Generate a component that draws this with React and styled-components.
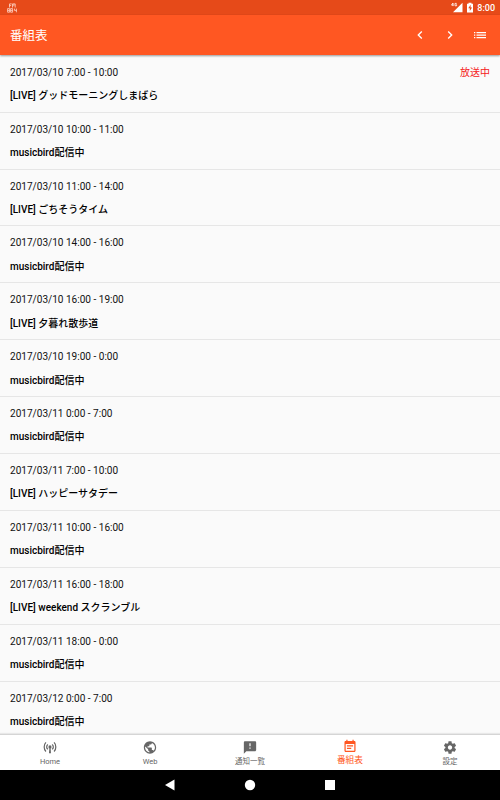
import React from 'react';
import styled, { createGlobalStyle } from 'styled-components';

const GlobalStyle = createGlobalStyle`
  * {
    box-sizing: border-box;
  }
  body {
    margin: 0;
    background: #fafafa;
    font-family: Roboto, "Noto Sans CJK JP", sans-serif;
  }
`;

const Screen = styled.div`
  width: 500px;
  height: 800px;
  display: flex;
  flex-direction: column;
  overflow: hidden;
`;

const StatusBar = styled.div`
  height: 15px;
  flex: none;
  padding: 0 5px 0 7px;
  display: flex;
  align-items: center;
  background: #e64a19;
  color: #fff;
`;

const StatusRight = styled.div`
  margin-left: auto;
  display: flex;
  align-items: center;
  gap: 3px;
`;

const Clock = styled.span`
  font-size: 9px;
  font-weight: 500;
  line-height: 15px;
  padding-top: 1px;
`;

const AppBar = styled.header`
  height: 40px;
  flex: none;
  padding: 0 12px 0 10px;
  display: flex;
  align-items: center;
  justify-content: space-between;
  background: #ff5722;
  box-shadow: 0 1px 2px rgba(0, 0, 0, 0.4);
  z-index: 1;
`;

const Title = styled.h1`
  margin: 0;
  padding-top: 1px;
  color: #fff;
  font-size: 12.5px;
  font-weight: 400;
  line-height: 21px;
`;

const Actions = styled.div`
  display: flex;
  gap: 14px;
`;

const Icon = styled.svg`
  display: block;
  flex: none;
  fill: currentColor;
`;

const ActionButton = styled.button`
  width: 16px;
  height: 16px;
  padding: 0;
  border: none;
  background: none;
  color: #fff;
  display: flex;
  align-items: center;
  justify-content: center;
`;

const List = styled.main`
  flex: 1;
  min-height: 0;
  overflow: hidden;
  padding-top: 0.8px;
  background: #fafafa;
`;

const Row = styled.div`
  height: 56.9px;
  padding: 10px 10px 0;
  border-bottom: 1px solid #e6e6e6;
  color: #111;
  font-size: 10px;
`;

const RowTop = styled.div`
  display: flex;
  justify-content: space-between;
  line-height: 14px;
`;

const Time = styled.span`
  font-size: 10.05px;
`;

const OnAir = styled.span`
  color: #f52020;
`;

const Program = styled.div`
  margin-top: 8.3px;
  line-height: 15px;
  font-weight: 500;
  color: #000;
`;

const BottomNav = styled.nav`
  height: 36px;
  flex: none;
  display: flex;
  border-top: 1px solid #d5d5d5;
  background: #fff;
  z-index: 1;
  box-shadow: 0 -1px 1px rgba(0, 0, 0, 0.07);
`;

const Tab = styled.div`
  width: 100px;
  padding-top: ${(props) => (props.$active ? '4px' : '5px')};
  display: flex;
  flex-direction: column;
  align-items: center;
  color: ${(props) => (props.$active ? '#ff5722' : '#666')};
`;

const TabLabel = styled.span`
  margin-top: ${(props) => (props.$active ? '0' : '1px')};
  font-size: ${(props) => (props.$active ? '8.75px' : '7.5px')};
  line-height: 12px;
`;

const SystemBar = styled.div`
  height: 30px;
  flex: none;
  padding: 0 162px;
  display: flex;
  align-items: center;
  justify-content: space-between;
  background: #000;
  color: #fff;
`;

const programs = [
  { time: '2017/03/10 7:00 - 10:00', name: '[LIVE] グッドモーニングしまばら', onAir: true },
  { time: '2017/03/10 10:00 - 11:00', name: 'musicbird配信中' },
  { time: '2017/03/10 11:00 - 14:00', name: '[LIVE] ごちそうタイム' },
  { time: '2017/03/10 14:00 - 16:00', name: 'musicbird配信中' },
  { time: '2017/03/10 16:00 - 19:00', name: '[LIVE] 夕暮れ散歩道' },
  { time: '2017/03/10 19:00 - 0:00', name: 'musicbird配信中' },
  { time: '2017/03/11 0:00 - 7:00', name: 'musicbird配信中' },
  { time: '2017/03/11 7:00 - 10:00', name: '[LIVE] ハッピーサタデー' },
  { time: '2017/03/11 10:00 - 16:00', name: 'musicbird配信中' },
  { time: '2017/03/11 16:00 - 18:00', name: '[LIVE] weekend スクランブル' },
  { time: '2017/03/11 18:00 - 0:00', name: 'musicbird配信中' },
  { time: '2017/03/12 0:00 - 7:00', name: 'musicbird配信中' },
];

// 24px material paths
const paths = {
  prev: 'M15.41 7.41L14 6l-6 6 6 6 1.41-1.41L10.83 12z',
  next: 'M10 6L8.59 7.41 13.17 12l-4.58 4.59L10 18l6-6z',
  web: 'M12 2C6.48 2 2 6.48 2 12s4.48 10 10 10 10-4.48 10-10S17.52 2 12 2zm-1 17.93c-3.95-.49-7-3.85-7-7.93 0-.62.08-1.21.21-1.79L9 15v1c0 1.1.9 2 2 2v1.93zm6.9-2.54c-.26-.81-1-1.39-1.9-1.39h-1v-3c0-.55-.45-1-1-1H8v-2h2c.55 0 1-.45 1-1V7h2c1.1 0 2-.9 2-2v-.41c2.93 1.19 5 4.06 5 7.41 0 2.08-.8 3.97-2.1 5.39z',
  notice: 'M20 2H4c-1.1 0-1.99.9-1.99 2L2 22l4-4h14c1.1 0 2-.9 2-2V4c0-1.1-.9-2-2-2zm-7 12h-2v-2h2v2zm0-4h-2V5h2v5z',
  schedule: 'M17 10H7v2h10v-2zm2-7h-1V1h-2v2H8V1H6v2H5c-1.11 0-1.99.9-1.99 2L3 19c0 1.1.89 2 2 2h14c1.1 0 2-.9 2-2V5c0-1.1-.9-2-2-2zm0 16H5V8h14v11zm-5-5H7v2h7v-2z',
  settings: 'M19.43 12.98c.04-.32.07-.64.07-.98s-.03-.66-.07-.98l2.11-1.65c.19-.15.24-.42.12-.64l-2-3.46c-.12-.22-.39-.3-.61-.22l-2.49 1c-.52-.4-1.08-.73-1.69-.98l-.38-2.65C14.46 2.18 14.25 2 14 2h-4c-.25 0-.46.18-.49.42l-.38 2.65c-.61.25-1.17.59-1.69.98l-2.49-1c-.23-.09-.49 0-.61.22l-2 3.46c-.13.22-.07.49.12.64l2.11 1.65c-.04.32-.07.65-.07.98s.03.66.07.98l-2.11 1.65c-.19.15-.24.42-.12.64l2 3.46c.12.22.39.3.61.22l2.49-1c.52.4 1.08.73 1.69.98l.38 2.65c.03.24.24.42.49.42h4c.25 0 .46-.18.49-.42l.38-2.65c.61-.25 1.17-.59 1.69-.98l2.49 1c.23.09.49 0 .61-.22l2-3.46c.12-.22.07-.49-.12-.64l-2.11-1.65zM12 15.5c-1.93 0-3.5-1.57-3.5-3.5s1.57-3.5 3.5-3.5 3.5 1.57 3.5 3.5-1.57 3.5-3.5 3.5z',
};

const ArrowIcon = ({ name }) => (
  <Icon width="16" height="16" viewBox="0 0 24 24">
    <path d={paths[name]} />
  </Icon>
);

const ListIcon = () => (
  <Icon width="12" height="8" viewBox="0 0 12 8">
    <path d="M0 .9h1.300v1.300H0zM2.500 .9H12v1.300H2.500zM0 3.400h1.300v1.300H0zM2.500 3.400H12v1.300H2.500zM0 6h1.300v1.300H0zM2.500 6H12v1.300H2.500z" />
  </Icon>
);

const TabIcon = ({ name }) => (
  <Icon width="16" height="15" viewBox="-1 -0.19 26 24.38">
    <path d={paths[name]} />
  </Icon>
);

const AntennaIcon = () => (
  <Icon width="16" height="15" viewBox="-1 -0.19 26 24.38">
    <circle cx="12" cy="11" r="2.5" />
    <path d="M11 12h2l.6 9.500h-3.200z" />
    <path
      d="M8.600 7a5 5 0 0 0 0 8M15.400 7a5 5 0 0 1 0 8M5.400 3.600C1.600 7.300 1.600 14.700 5.400 18.400M18.600 3.600c3.800 3.700 3.800 11.100 0 14.800"
      fill="none"
      stroke="currentColor"
      strokeWidth="2"
    />
  </Icon>
);

// the small "FM 88.4" notification mark
const StationIcon = () => (
  <Icon width="10" height="10" viewBox="0 0 10 10">
    <path
      d="M2.500 4.500V.9h2.200M2.500 2.600h1.700M5.500 4.500V.9h2.700v3.600M6.850 .9v2.300M.6 5.600h2v3.600h-2zM.6 7.400h2M3.600 5.600h2v3.600h-2zM3.600 7.400h2M7.500 5.600v1.800h2M9.400 5.600v3.700"
      fill="none"
      stroke="#ffd8ca"
      strokeWidth="0.8"
    />
  </Icon>
);

const SignalIcon = () => (
  <Icon width="12" height="11" viewBox="0 0 12 11">
    <path d="M11.500 .8v9.400H2z" />
    <path d="M2 1L.5 3.100h2M2 1v3.100M5.700 1.400H4v2.400h1.600V2.700h-.7" fill="none" stroke="#fff" strokeWidth="0.8" />
  </Icon>
);

const BatteryIcon = () => (
  <Icon width="8" height="11" viewBox="0 0 8 11">
    <path d="M2.500 .7h3v1H7v8.800H1V1.700h1.500z" />
    <path d="M4.600 2.800L2.300 6.300h1.500v2.800l2.300-3.700H4.600z" fill="#e64a19" />
  </Icon>
);

const tabs = [
  { label: 'Home' },
  { label: 'Web', icon: 'web' },
  { label: '通知一覧', icon: 'notice' },
  { label: '番組表', icon: 'schedule', active: true },
  { label: '設定', icon: 'settings' },
];

const App = () => {
  return (
    <Screen>
      <GlobalStyle />
      <StatusBar>
        <StationIcon />
        <StatusRight>
          <SignalIcon />
          <BatteryIcon />
          <Clock>8:00</Clock>
        </StatusRight>
      </StatusBar>
      <AppBar>
        <Title>番組表</Title>
        <Actions>
          <ActionButton><ArrowIcon name="prev" /></ActionButton>
          <ActionButton><ArrowIcon name="next" /></ActionButton>
          <ActionButton><ListIcon /></ActionButton>
        </Actions>
      </AppBar>
      <List>
        {programs.map((program) => (
          <Row key={program.time}>
            <RowTop>
              <Time>{program.time}</Time>
              {program.onAir && <OnAir>放送中</OnAir>}
            </RowTop>
            <Program>{program.name}</Program>
          </Row>
        ))}
      </List>
      <BottomNav>
        {tabs.map((tab) => (
          <Tab key={tab.label} $active={tab.active}>
            {tab.icon ? <TabIcon name={tab.icon} /> : <AntennaIcon />}
            <TabLabel $active={tab.active}>{tab.label}</TabLabel>
          </Tab>
        ))}
      </BottomNav>
      <SystemBar>
        <Icon width="16" height="12" viewBox="0 0 16 12"><path d="M3 6l9.500-5.500v11z" /></Icon>
        <Icon width="12" height="12" viewBox="0 0 12 12"><circle cx="6" cy="6" r="5.2" /></Icon>
        <Icon width="16" height="12" viewBox="0 0 16 12"><path d="M3 1h10v10H3z" /></Icon>
      </SystemBar>
    </Screen>
  );
};

export default App;
